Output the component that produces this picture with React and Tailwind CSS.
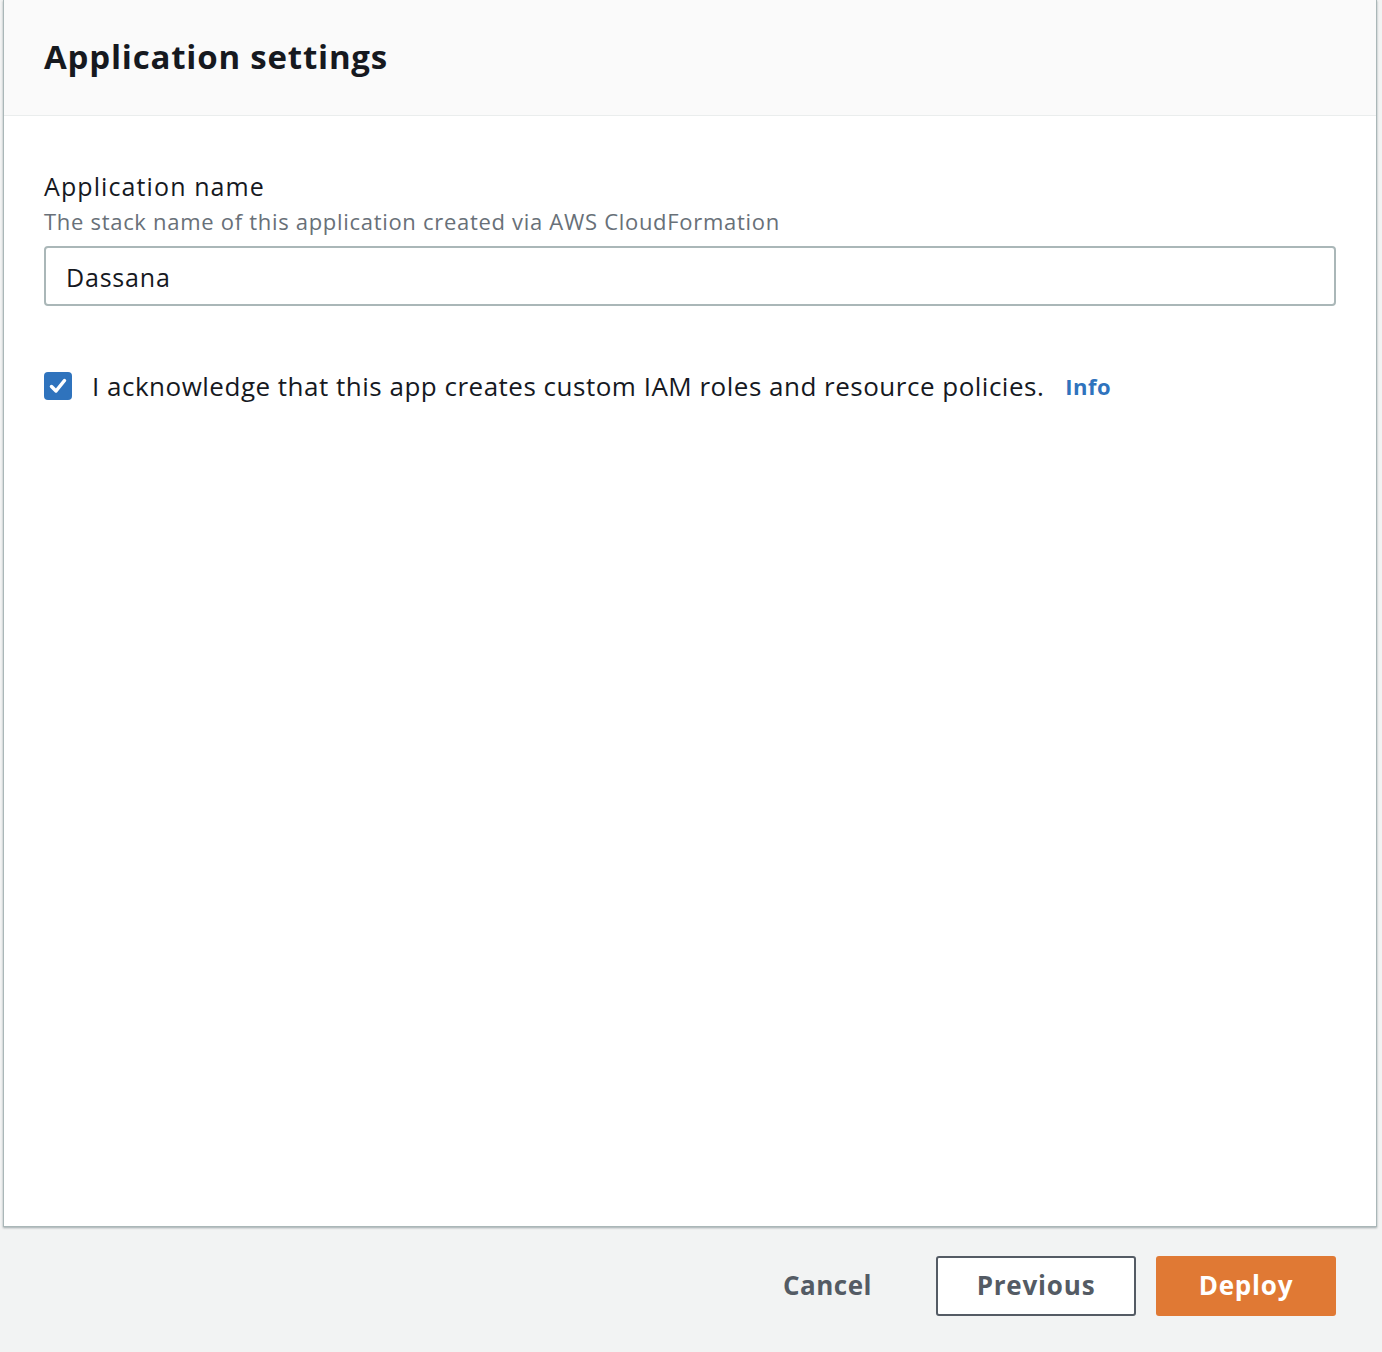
export default function App() {
  return (
    <div
      className="w-[1382px] h-[1352px] flex flex-col bg-[#f2f3f3] text-[#16191f]"
      style={{ fontFamily: '"Open Sans", "Noto Sans", sans-serif' }}
    >
      {/* Settings card */}
      <div className="h-[1227px] ml-[3px] mr-[5px] flex flex-col bg-white border-x border-b border-[#aab7b8] shadow-[0_1px_2px_rgba(0,28,36,0.35)]">
        <div className="h-[116px] shrink-0 bg-[#fafafa] border-b border-[#eaeded] flex items-center px-[40px]">
          <h2 className="text-[33px] font-bold tracking-[0.8px] leading-none pb-[2px]">Application settings</h2>
        </div>

        <div className="px-[40px] pt-[54px]">
          <div className="text-[25px] leading-[32px] tracking-[1.1px]">Application name</div>
          <div className="text-[22px] leading-[30px] tracking-[0.7px] text-[#687078] mt-[4px]">
            The stack name of this application created via AWS CloudFormation
          </div>
          <div className="mt-[10px] h-[60px] border-2 border-[#aab7b8] rounded-[4px] flex items-center px-[20px] pt-[3px]">
            <span className="text-[25px] tracking-[0.8px]">Dassana</span>
          </div>

          <div className="mt-[66px] flex items-center">
            <div className="w-[28px] h-[28px] rounded-[4px] bg-[#2f73bd] flex items-center justify-center shrink-0">
              <svg width="20" height="20" viewBox="0 0 20 20" fill="none">
                <path d="M3.5 10.5 L8 15 L16.5 4.5" stroke="white" strokeWidth="3.5" strokeLinecap="round" strokeLinejoin="round" />
              </svg>
            </div>
            <span className="ml-[20px] text-[26px] leading-none tracking-[0.5px]">
              I acknowledge that this app creates custom IAM roles and resource policies.
            </span>
            <span className="ml-[21px] text-[22px] font-bold tracking-[0.5px] text-[#2f73bd] leading-none">Info</span>
          </div>
        </div>
      </div>

      {/* Footer actions */}
      <div className="flex-1 flex items-center justify-end pr-[46px] pb-[8px]">
        <button className="h-[60px] px-[24px] text-[26px] font-bold tracking-[0.5px] text-[#545b64]">Cancel</button>
        <button className="ml-[40px] w-[200px] h-[60px] border-2 border-[#545b64] rounded-[3px] bg-white text-[26px] font-bold tracking-[0.8px] text-[#545b64]">
          Previous
        </button>
        <button className="ml-[20px] w-[180px] h-[60px] rounded-[3px] bg-[#e07934] text-[26px] font-bold tracking-[0.8px] text-white">
          Deploy
        </button>
      </div>
    </div>
  );
}
